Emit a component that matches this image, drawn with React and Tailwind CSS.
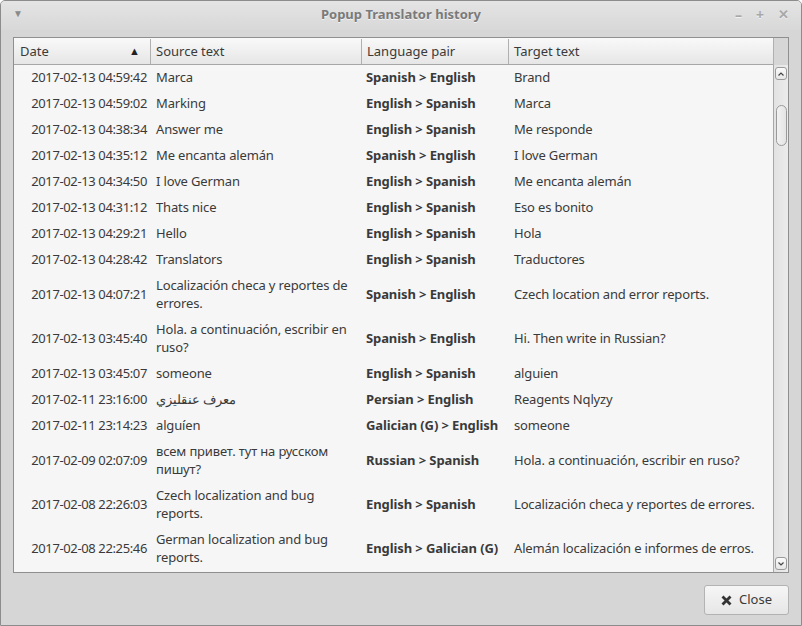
const rows = [
  ["2017-02-13 04:59:42", ["Marca"], "Spanish > English", "Brand"],
  ["2017-02-13 04:59:02", ["Marking"], "English > Spanish", "Marca"],
  ["2017-02-13 04:38:34", ["Answer me"], "English > Spanish", "Me responde"],
  ["2017-02-13 04:35:12", ["Me encanta alemán"], "Spanish > English", "I love German"],
  ["2017-02-13 04:34:50", ["I love German"], "English > Spanish", "Me encanta alemán"],
  ["2017-02-13 04:31:12", ["Thats nice"], "English > Spanish", "Eso es bonito"],
  ["2017-02-13 04:29:21", ["Hello"], "English > Spanish", "Hola"],
  ["2017-02-13 04:28:42", ["Translators"], "English > Spanish", "Traductores"],
  ["2017-02-13 04:07:21", ["Localización checa y reportes de", "errores."], "Spanish > English", "Czech location and error reports."],
  ["2017-02-13 03:45:40", ["Hola. a continuación, escribir en", "ruso?"], "Spanish > English", "Hi. Then write in Russian?"],
  ["2017-02-13 03:45:07", ["someone"], "English > Spanish", "alguien"],
  ["2017-02-11 23:16:00", ["معرف عنقليزي"], "Persian > English", "Reagents Nqlyzy"],
  ["2017-02-11 23:14:23", ["alguíen"], "Galician (G) > English", "someone"],
  ["2017-02-09 02:07:09", ["всем привет. тут на русском", "пишут?"], "Russian > Spanish", "Hola. a continuación, escribir en ruso?"],
  ["2017-02-08 22:26:03", ["Czech localization and bug", "reports."], "English > Spanish", "Localización checa y reportes de errores."],
  ["2017-02-08 22:25:46", ["German localization and bug", "reports."], "English > Galician (G)", "Alemán localización e informes de erros."],
];

const font = { fontFamily: '"Noto Sans", "Open Sans", sans-serif' };

const App = () => {
  return (
    <div
      className="w-[802px] h-[626px] bg-[#d6d6d6] border border-[#8c8c8c] rounded-t-[5px] flex flex-col text-[13px] text-[#3a3a3a] overflow-hidden"
      style={font}
    >
      {/* Title bar */}
      <div className="h-[29px] flex items-center px-[12px] bg-gradient-to-b from-[#e4e4e4] to-[#d8d8d8] shrink-0">
        <span className="text-[#8a8a8a] text-[10px] w-[60px] -mt-[5px]">▼</span>
        <div className="flex-1 text-center font-bold text-[#7a7a7a] -mt-[2px] [text-shadow:0_1px_0_#f2f2f2]">
          Popup Translator history
        </div>
        <div className="w-[60px] flex justify-end items-center gap-[14px] text-[#a8a8a8] font-bold text-[14px] -mt-[2px] [text-shadow:0_1px_0_#f2f2f2]">
          <span>–</span>
          <span>+</span>
          <span className="text-[13px]">✕</span>
        </div>
      </div>

      {/* Table frame */}
      <div className="mx-[12px] mt-[7px] h-[536px] border border-[#8f8f8f] bg-[#f6f6f6] flex">
        <div className="w-[759px] flex flex-col">
          {/* Header */}
          <div className="h-[27px] flex bg-gradient-to-b from-[#f9f9f9] to-[#e6e6e6] border-b border-[#a6a6a6] shrink-0 pt-[1px]">
            <div className="w-[137px] border-r border-[#b0b0b0] flex items-center justify-between pl-[6px] pr-[10px]">
              <span>Date</span>
              <span className="text-[11px] text-[#222]">▲</span>
            </div>
            <div className="w-[211px] border-r border-[#b0b0b0] flex items-center pl-[5px]">Source text</div>
            <div className="w-[147px] border-r border-[#b0b0b0] flex items-center pl-[5px]">Language pair</div>
            <div className="flex-1 flex items-center pl-[5px]">Target text</div>
          </div>
          {/* Rows */}
          <div className="flex flex-col leading-[18px]">
            {rows.map(([date, src, pair, target], i) => (
              <div key={i} className={`flex items-center pb-[2px] ${src.length > 1 ? "h-[44px]" : "h-[26px]"}`}>
                <div className="w-[137px] text-right pr-[4px] tracking-[-0.37px]">{date}</div>
                <div className="w-[211px] pl-[5px] tracking-[-0.15px]">
                  {src.map((l, j) => (
                    <div key={j}>{l}</div>
                  ))}
                </div>
                <div className="w-[147px] pl-[4px] font-bold tracking-[-0.1px]">{pair}</div>
                <div className="flex-1 pl-[5px] tracking-[-0.17px]">{target}</div>
              </div>
            ))}
          </div>
        </div>

        {/* Scrollbar */}
        <div className="flex-1 flex flex-col">
          <div className="h-[27px] bg-[#d6d6d6] border-l border-[#b0b0b0] shrink-0"></div>
          <div className="flex-1 border-l border-[#a8a8a8] bg-gradient-to-r from-[#e2e2e2] to-[#ececec] flex flex-col items-center pt-[2px] pb-[2px]">
            <div className="w-[12px] h-[13px] rounded-[3px] border border-[#9a9a9a] bg-gradient-to-b from-[#fafafa] to-[#e6e6e6] flex items-center justify-center">
              <svg width="6" height="4" viewBox="0 0 6 4">
                <path d="M0.5 3.5 L3 1 L5.5 3.5" stroke="#444" strokeWidth="1.2" fill="none" />
              </svg>
            </div>
            <div className="mt-[25px] w-[11px] h-[41px] rounded-[6px] border border-[#9a9a9a] bg-gradient-to-r from-[#f2f2f2] to-[#e4e4e4]"></div>
            <div className="flex-1"></div>
            <div className="w-[12px] h-[13px] rounded-[3px] border border-[#9a9a9a] bg-gradient-to-b from-[#fafafa] to-[#e6e6e6] flex items-center justify-center">
              <svg width="6" height="4" viewBox="0 0 6 4">
                <path d="M0.5 0.5 L3 3 L5.5 0.5" stroke="#444" strokeWidth="1.2" fill="none" />
              </svg>
            </div>
          </div>
        </div>
      </div>

      {/* Footer */}
      <div className="flex justify-end pr-[12px] pt-[12px]">
        <button className="w-[85px] h-[30px] rounded-[3px] border border-[#b3b3b3] bg-gradient-to-b from-[#f6f6f6] to-[#e6e6e6] flex items-center justify-center gap-[7px] text-[#3a3a3a]">
          <svg width="11" height="11" viewBox="0 0 11 11">
            <path d="M1.5 1.5 L9.5 9.5 M9.5 1.5 L1.5 9.5" stroke="#333" strokeWidth="2.8" strokeLinecap="butt" />
          </svg>
          <span>Close</span>
        </button>
      </div>
    </div>
  );
};

export default App;
